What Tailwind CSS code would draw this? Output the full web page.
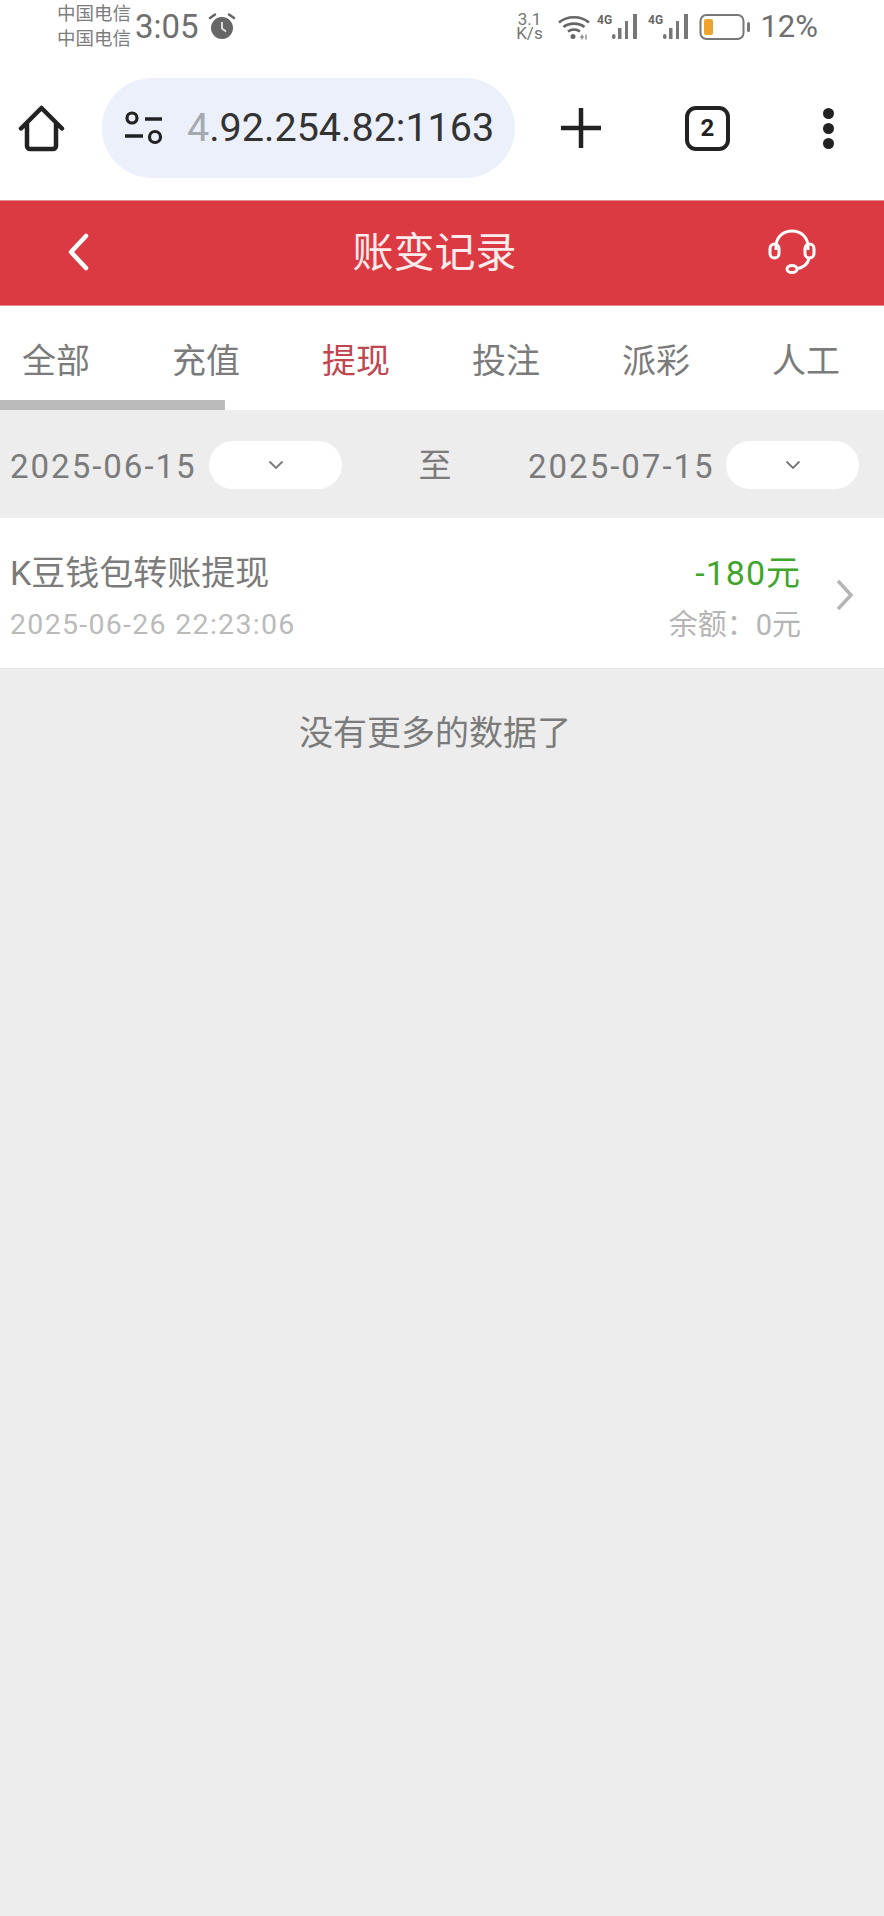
<!DOCTYPE html>
<html lang="zh">

<head>
  <meta charset="UTF-8">
  <meta name="viewport" content="width=device-width, initial-scale=1.0">
  <script src="https://cdn.jsdelivr.net/npm/@tailwindcss/browser@4"></script>
</head>

<body class="bg-[#ededed] font-['Roboto','Noto_Sans_CJK_SC',sans-serif] overflow-hidden">
  <div class="w-[884px] h-[1916px] flex flex-col">

    <!-- status bar -->
    <div class="h-[56px] pb-[3px] bg-white flex items-center pl-[57px] pr-[66px] text-[#6f6f6f]">
      <div class="flex flex-col text-[18.500px] leading-[25px] w-[78px] text-[#7d7d7d] whitespace-nowrap">
        <span>中国电信</span>
        <span>中国电信</span>
      </div>
      <span class="text-[33px] leading-none">3:05</span>
      <svg class="ml-[9px]" width="28" height="28" viewBox="0 0 28 28">
        <circle cx="14" cy="15" r="11" fill="#666" />
        <path d="M14 9v6.500l4 3" fill="none" stroke="#ddd" stroke-width="2" />
        <path d="M2 5l5-3.500M26 5l-5-3.500" stroke="#666" stroke-width="2.500" stroke-linecap="round" />
      </svg>
      <div class="ml-auto flex flex-col items-center w-[30px] text-[#757575]">
        <span class="text-[17px] h-[15px] leading-[15px]">3.1</span>
        <span class="text-[17px] h-[15px] leading-[13px]">K/s</span>
      </div>
      <svg class="ml-[14px]" width="32" height="28" viewBox="0 0 32 28">
        <path d="M1 9.500c8-7 22-7 30 0M5.500 14c5.500-4.500 15.500-4.500 21 0M10 18.500c3.500-2.500 8.500-2.500 12 0" fill="none" stroke="#666" stroke-width="2.600" />
        <circle cx="15" cy="23.500" r="2.500" fill="#666" />
        <path d="M22 24h4M24 21.500v5M28 21.500v5" stroke="#777" stroke-width="1.200" />
      </svg>
      <svg class="ml-[7px]" width="44" height="28" viewBox="0 0 44 28">
        <text x="0" y="11" font-size="12" font-weight="700" fill="#666" font-family="Roboto">4G</text>
        <rect x="15" y="21" width="3.500" height="5" rx="1.700" fill="#777" />
        <rect x="21" y="15" width="3.500" height="11" fill="#777" />
        <rect x="28" y="8" width="3" height="18" fill="#777" />
        <rect x="36" y="1" width="4" height="25" fill="#777" />
      </svg>
      <svg class="ml-[7px]" width="44" height="28" viewBox="0 0 44 28">
        <text x="0" y="11" font-size="12" font-weight="700" fill="#666" font-family="Roboto">4G</text>
        <rect x="15" y="21" width="3.500" height="5" rx="1.700" fill="#777" />
        <rect x="21" y="15" width="3.500" height="11" fill="#777" />
        <rect x="28" y="8" width="3" height="18" fill="#777" />
        <rect x="36" y="1" width="4" height="25" fill="#777" />
      </svg>
      <svg class="ml-[7px]" width="52" height="28" viewBox="0 0 52 28">
        <rect x="1.500" y="2" width="43" height="24" rx="6" fill="none" stroke="#777" stroke-width="2" />
        <rect x="5" y="6" width="9" height="16" rx="2" fill="#eda32c" />
        <rect x="48" y="9" width="3" height="10" rx="1.500" fill="#777" />
      </svg>
      <span class="ml-[9px] text-[31px] leading-none">12%</span>
    </div>

    <!-- browser toolbar -->
    <div class="h-[144px] bg-white flex items-center relative">
      <svg class="ml-[18px]" width="47" height="47" viewBox="0 0 47 47">
        <path d="M3 23.500 23.500 3 44 23.500M9 19v22a3 3 0 0 0 3 3h23a3 3 0 0 0 3-3V19" fill="none" stroke="#222" stroke-width="4.500" stroke-linecap="round" stroke-linejoin="round" />
      </svg>
      <div class="ml-[37px] w-[413px] h-[100px] rounded-full bg-[#ebf0fa] flex items-center overflow-hidden">
        <svg class="ml-[21px] shrink-0" width="40" height="34" viewBox="0 0 40 34">
          <circle cx="9" cy="7" r="5" fill="none" stroke="#222" stroke-width="3.200" />
          <path d="M22 8h17M2 25h18" stroke="#222" stroke-width="3.600" />
          <circle cx="32" cy="26" r="5.500" fill="none" stroke="#222" stroke-width="3.200" />
        </svg>
        <span class="ml-[24px] text-[39.500px] leading-none text-[#333] whitespace-nowrap"><span class="text-[#a5a9b0]">4</span>.92.254.82:1163</span>
      </div>
      <svg class="ml-[46px]" width="40" height="40" viewBox="0 0 40 40">
        <path d="M0 20h40M20 0v40" stroke="#222" stroke-width="4.500" stroke-linecap="round" />
      </svg>
      <div class="ml-[84px] w-[45px] h-[45px] border-[4.500px] border-[#222] rounded-[11px] flex items-center justify-center text-[24px] font-bold text-[#222]">2</div>
      <div class="ml-[93px] flex flex-col gap-[4px]">
        <span class="w-[11px] h-[11px] rounded-full bg-[#222]"></span>
        <span class="w-[11px] h-[11px] rounded-full bg-[#222]"></span>
        <span class="w-[11px] h-[11px] rounded-full bg-[#222]"></span>
      </div>
    </div>

    <!-- red header -->
    <div class="h-[106px] bg-[#db3a42] border-y border-[#e58a8d] flex items-center justify-between relative">
      <svg class="ml-[68px] -mt-[2px]" width="21" height="38" viewBox="0 0 21 38">
        <path d="M18 3 3 19l15 16" fill="none" stroke="#fff" stroke-width="4.500" stroke-linecap="round" stroke-linejoin="round" />
      </svg>
      <span class="ml-[12px] text-[41px] leading-none text-white/90">账变记录</span>
      <svg class="mr-[68px] -mt-[4px]" width="48" height="46" viewBox="0 0 48 46">
        <path d="M8 22V19C8 9 15 3 24 3s16 6 16 16v3" fill="none" stroke="#fff" stroke-width="3" />
        <rect x="2" y="16" width="9" height="14" rx="4.500" fill="none" stroke="#fff" stroke-width="3" />
        <rect x="37" y="16" width="9" height="14" rx="4.500" fill="none" stroke="#fff" stroke-width="3" />
        <path d="M41 30c-1 7-7 10-13 11" fill="none" stroke="#fff" stroke-width="3" />
        <ellipse cx="24" cy="41" rx="5" ry="3.500" fill="#db3a42" stroke="#fff" stroke-width="3" />
      </svg>
    </div>

    <!-- tabs -->
    <div class="h-[104px] bg-white relative overflow-hidden">
      <div class="flex -ml-[19px] h-full">
        <div class="w-[150px] shrink-0 flex justify-center pt-[31px] text-[34px] leading-[48px] text-[#7b7b7b]">全部</div>
        <div class="w-[150px] shrink-0 flex justify-center pt-[31px] text-[34px] leading-[48px] text-[#7b7b7b]">充值</div>
        <div class="w-[150px] shrink-0 flex justify-center pt-[31px] text-[34px] leading-[48px] text-[#c04650]">提现</div>
        <div class="w-[150px] shrink-0 flex justify-center pt-[31px] text-[34px] leading-[48px] text-[#7b7b7b]">投注</div>
        <div class="w-[150px] shrink-0 flex justify-center pt-[31px] text-[34px] leading-[48px] text-[#7b7b7b]">派彩</div>
        <div class="w-[150px] shrink-0 flex justify-center pt-[31px] text-[34px] leading-[48px] text-[#7b7b7b]">人工</div>
      </div>
      <div class="absolute left-0 bottom-0 w-[225px] h-[10px] bg-[#bbbbbb]"></div>
    </div>

    <!-- date filter -->
    <div class="h-[108px] flex items-center pl-[10px] text-[33px] text-[#7b7b7b] shrink-0">
      <span class="w-[199px] leading-none tracking-[2px] mt-[4px]">2025-06-15</span>
      <div class="w-[133px] h-[48px] bg-white rounded-full flex items-center justify-center mt-[2px]">
        <svg width="16" height="10" viewBox="0 0 16 10">
          <path d="M1.500 1.500 8 8l6.500-6.500" fill="none" stroke="#777" stroke-width="1.800" />
        </svg>
      </div>
      <span class="w-[186px] text-center leading-none mt-[2px]">至</span>
      <span class="w-[198px] leading-none tracking-[2px] mt-[4px]">2025-07-15</span>
      <div class="w-[133px] h-[48px] bg-white rounded-full flex items-center justify-center mt-[2px]">
        <svg width="16" height="10" viewBox="0 0 16 10">
          <path d="M1.500 1.500 8 8l6.500-6.500" fill="none" stroke="#777" stroke-width="1.800" />
        </svg>
      </div>
    </div>

    <!-- record row -->
    <div class="h-[151px] bg-white border-b border-[#e4e4e4] flex items-center pl-[10px] shrink-0">
      <div class="flex flex-col pt-[5px]">
        <span class="text-[34px] leading-[52px] text-[#7b7b7b]">K豆钱包转账提现</span>
        <span class="text-[28.500px] leading-[40px] mt-[6px] text-[#bbbbbb] tracking-[1.300px]">2025-06-26 22:23:06</span>
      </div>
      <div class="ml-auto flex flex-col items-end pt-[5px]">
        <span class="text-[34px] leading-[52px] text-[#3fa52c] tracking-[1px]">-180元</span>
        <span class="text-[29px] leading-[40px] mt-[6px] text-[#b5b5b5]">余额：0元</span>
      </div>
      <svg class="ml-[35px] mr-[31px] mt-[3px]" width="17" height="32" viewBox="0 0 17 32">
        <path d="M2 2l13 14L2 30" fill="none" stroke="#b5b5b5" stroke-width="3.500" />
      </svg>
    </div>

    <div class="pt-[40px] pr-[14px] text-center text-[34px] leading-[48px] text-[#7b7b7b]">没有更多的数据了</div>
  </div>
</body>

</html>
